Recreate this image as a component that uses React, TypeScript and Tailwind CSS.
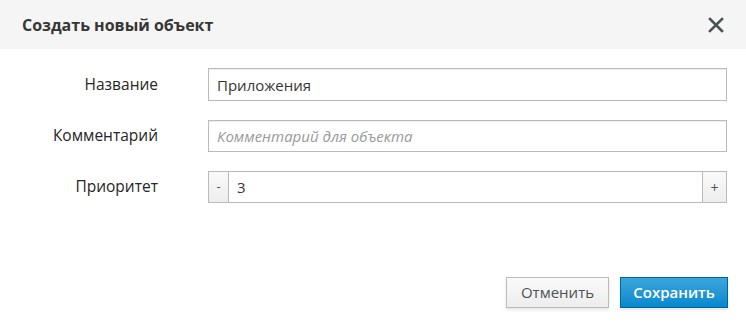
import React, { useState } from 'react';

const fieldLabel = 'w-[158px] shrink-0 text-right text-[15.5px] font-normal text-[#262626]';

const App: React.FC = () => {
  const [name, setName] = useState('Приложения');
  const [comment, setComment] = useState('');
  const [priority, setPriority] = useState(3);

  return (
    <div className="w-[746px] h-[327px] bg-white font-['Open_Sans',sans-serif] text-[#363636] flex flex-col">
      <header className="h-[49px] bg-[#f5f5f5] flex items-center justify-between pl-[22px] pr-[22px]">
        <h1 className="text-[16px] font-bold text-[#363636]">Создать новый объект</h1>
        <button className="w-4 h-4 flex items-center justify-center text-[#4d5258]" aria-label="Закрыть">
          <svg width="16" height="16" viewBox="0 0 16 16">
            <path d="M2 2 L14 14 M14 2 L2 14" stroke="currentColor" strokeWidth="2.6" strokeLinecap="square" />
          </svg>
        </button>
      </header>

      <form className="flex flex-col gap-[19px] pt-[19px] pr-[19px]">
        <div className="flex items-center">
          <label className={fieldLabel}>Название</label>
          <input
            value={name}
            onChange={(e) => setName(e.target.value)}
            className="ml-[50px] flex-1 h-[33px] border border-[#bbbbbb] px-2 text-[15px] text-[#363636] outline-none shadow-[inset_0_1px_1px_rgba(3,3,3,0.075)]"
          />
        </div>
        <div className="flex items-center">
          <label className={fieldLabel}>Комментарий</label>
          <input
            value={comment}
            onChange={(e) => setComment(e.target.value)}
            placeholder="Комментарий для объекта"
            className="ml-[50px] flex-1 h-[32px] border border-[#bbbbbb] px-2 text-[15px] text-[#363636] outline-none placeholder:italic placeholder:text-[#999999] shadow-[inset_0_1px_1px_rgba(3,3,3,0.075)]"
          />
        </div>
        <div className="flex items-center">
          <label className={fieldLabel}>Приоритет</label>
          <div className="ml-[50px] flex-1 h-[32px] flex border border-[#bbbbbb]">
            <button
              type="button"
              onClick={() => setPriority((p) => p - 1)}
              className="w-[20px] bg-gradient-to-b from-[#fafafa] to-[#ededed] border-r border-[#bbbbbb] text-[13px] text-[#4d5258]"
            >
              -
            </button>
            <input
              value={priority}
              onChange={(e) => setPriority(Number(e.target.value) || 0)}
              className="flex-1 px-2 text-[15px] text-[#363636] outline-none"
            />
            <button
              type="button"
              onClick={() => setPriority((p) => p + 1)}
              className="w-[24px] bg-gradient-to-b from-[#fafafa] to-[#ededed] border-l border-[#bbbbbb] text-[14px] text-[#4d5258]"
            >
              +
            </button>
          </div>
        </div>
      </form>

      <footer className="mt-auto mb-[19px] pr-[18px] flex justify-end gap-[11px]">
        <button className="w-[103px] h-[31px] border border-[#bbbbbb] bg-gradient-to-b from-[#fafafa] to-[#ededed] text-[15px] text-[#4d5258] shadow-[0_2px_3px_rgba(3,3,3,0.1)]">
          Отменить
        </button>
        <button className="w-[108px] h-[31px] border border-[#00659c] bg-gradient-to-b from-[#39a5dc] to-[#0088ce] text-[15px] font-semibold text-white shadow-[0_2px_3px_rgba(3,3,3,0.1)]">
          Сохранить
        </button>
      </footer>
    </div>
  );
};

export default App;
